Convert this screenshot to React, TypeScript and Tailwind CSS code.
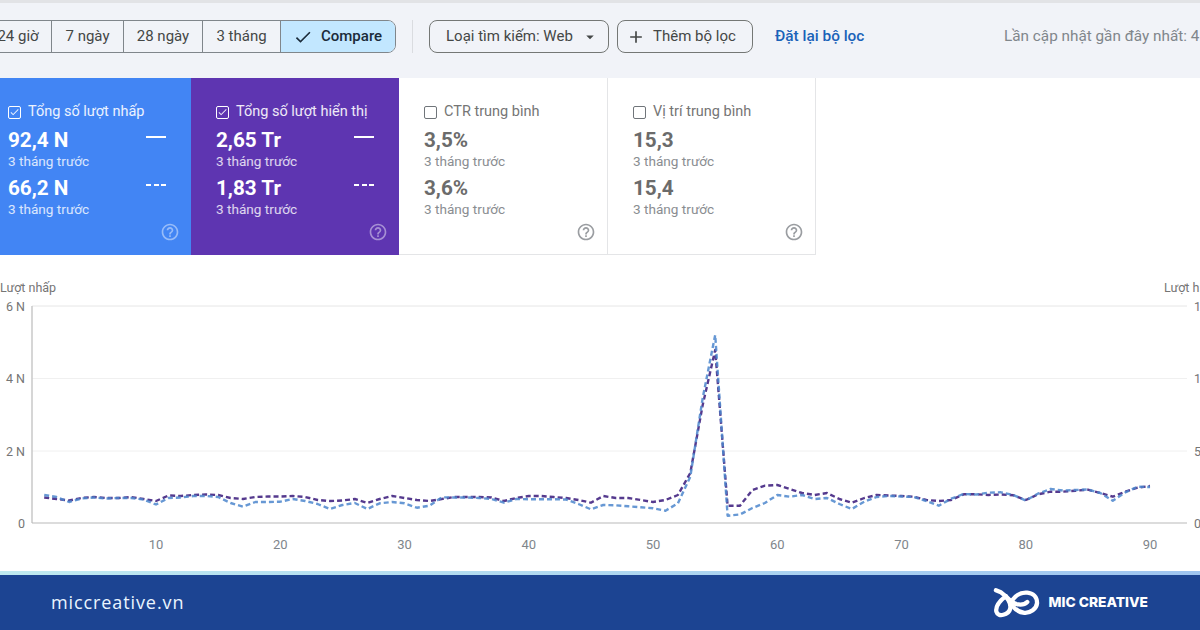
import { MdAdd, MdArrowDropDown, MdCheck, MdHelpOutline } from "react-icons/md";

const purple = [497.5,499,500.5,498,497,498,498,497,499,501,495.5,496,495,494.5,495,498,499,497,496.5,496.5,496,497,500,501,500.5,499,503,499,496,498,500,501,499,497,497,497,497.5,501,498,496,496,497,498,500,502.7,496,498,498,500,502,500,495,473,405,350,505.7,505.7,490,485.7,485,489,493,495,493,499,502.7,498,495,495.5,496,496.7,500,501,500,494.3,494.3,495,494.5,495.3,500,494.3,491.7,491.7,490.7,489.7,493,496.7,491.7,487.7,486];
const blue = [495,497,502,498.5,497.5,498.5,498,498,499.5,504.5,498,497.5,496,496,497,503,506.7,502,502,501.7,499,501,504,509,505,503,509,503.3,502,503.3,507.7,505.7,497.3,497.5,497.5,498,499,502.7,499,499.3,499.3,499.3,499.5,504,509.3,505,505.3,506.3,507.3,508.3,510.7,503.3,476.7,398,335,515.7,514.5,508,503,495,496.7,495,499,498,504,509,501.7,497,496,496.5,497,501,505.7,498.7,494,494.5,492.7,492.3,495,500.5,493.5,489,490.5,490,489.5,493,500.7,492.5,486.7,487];

const toPoints = (ys: number[]) =>
  ys.map((y, i) => `${(44.2 + i * 12.425).toFixed(1)},${y}`).join(" ");

const metrics = [
  { title: "Tổng số lượt nhấp", a: "92,4 N", b: "66,2 N", checked: true, bg: "bg-[#4285f4]", w: "w-[208px]" },
  { title: "Tổng số lượt hiển thị", a: "2,65 Tr", b: "1,83 Tr", checked: true, bg: "bg-[#5e35b1]", w: "w-[208px]" },
  { title: "CTR trung bình", a: "3,5%", b: "3,6%", checked: false, bg: "bg-white", w: "w-[209px]" },
  { title: "Vị trí trung bình", a: "15,3", b: "15,4", checked: false, bg: "bg-white", w: "w-[208px]" },
];

function Segment({ label, className }: { label: string; className: string }) {
  return (
    <div className={`flex h-full items-center justify-center border-r border-[#80868b] text-[15px] text-[#444746] ${className}`}>
      {label}
    </div>
  );
}

function Card({ m }: { m: (typeof metrics)[number] }) {
  const on = m.checked;
  return (
    <div
      className={`flex h-[177px] shrink-0 flex-col px-[25px] pt-[25px] ${m.w} ${m.bg} ${
        on ? "text-white" : "border-r border-b border-[#e4e5e7] text-[#6b6b6b]"
      }`}
    >
      <div className={`flex h-[18px] items-center gap-[7px] text-[14.5px] ${on ? "text-white/90" : "text-[#757575]"}`}>
        <span
          className={`flex h-[13px] w-[13px] items-center justify-center rounded-[2px] border ${
            on ? "border-white" : "border-[#70757a]"
          }`}
        >
          {on && <MdCheck size={12} />}
        </span>
        <span>{m.title}</span>
      </div>
      <div className="mt-[7px] flex h-[24px] items-center justify-between text-[20.7px] leading-[24px] font-bold">
        <span>{m.a}</span>
        {on && <span className="mb-[7px] h-[2px] w-[20px] bg-white" />}
      </div>
      <div className={`h-[20px] text-[13.6px] leading-[18px] ${on ? "text-white/80" : "text-[#8a8d91]"}`}>3 tháng trước</div>
      <div className="mt-[4px] flex h-[24px] items-center justify-between text-[20.7px] leading-[24px] font-bold">
        <span>{m.b}</span>
        {on && (
          <span className="mb-[7px] flex w-[20px] justify-between">
            <span className="h-[2px] w-[5px] bg-white" />
            <span className="h-[2px] w-[5px] bg-white" />
            <span className="h-[2px] w-[5px] bg-white" />
          </span>
        )}
      </div>
      <div className={`h-[20px] text-[13.6px] leading-[18px] ${on ? "text-white/80" : "text-[#8a8d91]"}`}>3 tháng trước</div>
      <div className={`mt-[2px] -mr-[14px] flex justify-end ${on ? "text-white/45" : "text-[#9a9da1]"}`}>
        <MdHelpOutline size={20} />
      </div>
    </div>
  );
}

function Chart() {
  const grid = [306, 378.5, 451];
  const xTicks = [10, 20, 30, 40, 50, 60, 70, 80, 90];
  return (
    <svg viewBox="0 255 1200 316" className="block h-[316px] w-[1200px]" fontFamily="Roboto, sans-serif">
      <text x="0" y="292" fontSize="12.5" fill="#757575">Lượt nhấp</text>
      <text x="1164" y="292" fontSize="12.5" fill="#757575">Lượt hiển thị</text>
      {grid.map((y) => (
        <line key={y} x1="32" x2="1187" y1={y} y2={y} stroke={y === 306 ? "#e6e6e6" : "#f0f0f0"} />
      ))}
      <line x1="32" x2="32" y1="306" y2="523" stroke="#c9c9c9" strokeWidth="1.5" />
      <line x1="32" x2="1187" y1="523" y2="523" stroke="#b9b9b9" />
      {[["6 N", 310.5], ["4 N", 383], ["2 N", 455.5], ["0", 527.5]].map(([t, y]) => (
        <text key={t} x="25" y={y} fontSize="12.5" fill="#757575" textAnchor="end">{t}</text>
      ))}
      {[["1", 310.5], ["1", 383], ["5", 455.5], ["0", 527.5]].map(([t, y], i) => (
        <text key={i} x="1194" y={y} fontSize="12.5" fill="#757575">{t}</text>
      ))}
      {xTicks.map((d) => (
        <text key={d} x={44.2 + (d - 1) * 12.425} y="549" fontSize="13" fill="#80868b" textAnchor="middle">{d}</text>
      ))}
      <polyline points={toPoints(purple)} fill="none" stroke="#553a8e" strokeWidth="2.4" strokeDasharray="5 3" strokeLinejoin="round" />
      <polyline points={toPoints(blue)} fill="none" stroke="#4c86cc" strokeOpacity="0.85" strokeWidth="2.4" strokeDasharray="5 3" strokeLinejoin="round" />
    </svg>
  );
}

export default function App() {
  return (
    <div className="flex h-[630px] w-[1200px] flex-col overflow-hidden bg-white font-['Roboto',sans-serif]">
      <div className="h-[3px] shrink-0 bg-[#e2e3e6]" />
      <div className="flex h-[75px] shrink-0 items-start overflow-hidden whitespace-nowrap bg-[#f1f3f8] pt-[17px]">
        <div className="-ml-[16px] flex h-[33px] shrink-0 overflow-hidden rounded-r-[8px] border border-[#80868b]">
          <Segment label="24 giờ" className="w-[67px]" />
          <Segment label="7 ngày" className="w-[72px]" />
          <Segment label="28 ngày" className="w-[79px]" />
          <Segment label="3 tháng" className="w-[78px]" />
          <div className="flex h-full w-[114px] items-center gap-[8px] bg-[#c2e7ff] pl-[12px] text-[15px] font-medium text-[#1b2b3a]">
            <MdCheck size={20} />
            <span>Compare</span>
          </div>
        </div>
        <div className="ml-[16px] h-[33px] w-px shrink-0 bg-[#dadce0]" />
        <div className="ml-[16px] flex h-[33px] w-[180px] shrink-0 items-center rounded-[8px] border border-[#747775] pl-[16px] text-[15px] text-[#444746]">
          <span>Loại tìm kiếm: Web</span>
          <MdArrowDropDown size={18} className="ml-[8px]" />
        </div>
        <div className="ml-[8px] flex h-[33px] w-[136px] shrink-0 items-center rounded-[8px] border border-[#747775] pl-[8px] text-[15px] text-[#444746]">
          <MdAdd size={20} />
          <span className="ml-[7px]">Thêm bộ lọc</span>
        </div>
        <span className="ml-[22px] flex h-[33px] w-[90px] shrink-0 items-center text-[15.4px] font-medium text-[#1a62b8]">Đặt lại bộ lọc</span>
        <span className="ml-[139px] flex h-[33px] shrink-0 items-center text-[15.3px] text-[#80868b]">Lần cập nhật gần đây nhất: 4</span>
      </div>
      <div className="-ml-[17px] flex shrink-0">
        {metrics.map((m) => (
          <Card key={m.title} m={m} />
        ))}
      </div>
      <Chart />
      <div className="h-[4px] shrink-0 bg-gradient-to-r from-[#bfeaf0] to-[#9fc5f0]" />
      <div className="flex h-[55px] shrink-0 items-center justify-between bg-[#1c4492] pr-[52px] pl-[51px]">
        <span className="font-['Open_Sans',sans-serif] text-[18px] tracking-[0.9px] text-[#eaf5ff]">miccreative.vn</span>
        <div className="flex items-center gap-[9px]">
          <svg width="47" height="30" viewBox="0 0 48 30" fill="none" stroke="white" strokeWidth="4.4" strokeLinecap="round" strokeLinejoin="round">
            <path d="M3 2 L8 4 C14 8 19 15 17.5 21 C16 27 5 30 3.5 24 C2 18 8 12 13 8" />
            <path d="M13 8 C17 12 20 16 26 16.5 C30 17 33 16 35 14" />
            <path d="M19 13 C23 7 29 4 35 4.5 C41 5 45 9 45 15 C44.5 21 38 25.5 32 25 C27 24.5 23 22 20 18" />
          </svg>
          <span className="font-['Inter',sans-serif] text-[13.75px] font-extrabold text-white">MIC CREATIVE</span>
        </div>
      </div>
    </div>
  );
}
